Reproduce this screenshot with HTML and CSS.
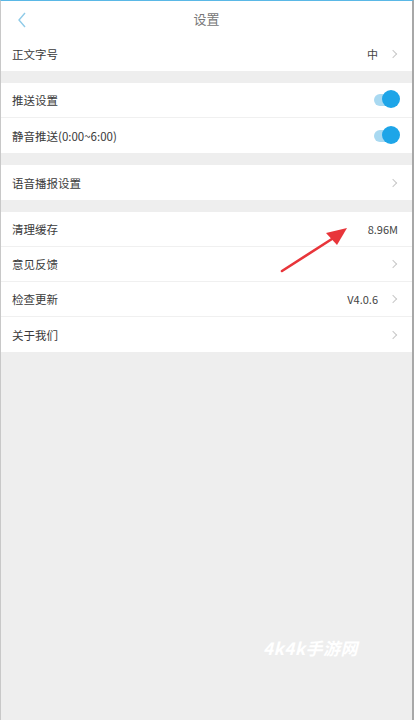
FILE: index.html
```html
<!DOCTYPE html>
<html lang="zh">
<head>
<meta charset="utf-8">
<link rel="stylesheet" href="styles.css">
</head>
<body>
<div class="screen">
  <header class="topbar">
    <svg class="back" width="10" height="16" viewBox="0 0 10 16"><path d="M8 1 L2 8 L8 15" fill="none" stroke="#8fcbe8" stroke-width="1.4"/></svg>
    <div class="title">设置</div>
  </header>

  <section class="group">
    <div class="row"><span class="label">正文字号</span><span class="right"><span class="val">中</span><span class="chev"></span></span></div>
  </section>

  <section class="group">
    <div class="row"><span class="label">推送设置</span><span class="toggle"><span class="knob"></span></span></div>
    <div class="row"><span class="label">静音推送(0:00~6:00)</span><span class="toggle"><span class="knob"></span></span></div>
  </section>

  <section class="group">
    <div class="row"><span class="label">语音播报设置</span><span class="right"><span class="chev"></span></span></div>
  </section>

  <section class="group">
    <div class="row cache"><span class="label">清理缓存</span><span class="right"><span class="val">8.96M</span></span>
      <svg class="arrow" width="80" height="50" viewBox="0 0 80 50"><path d="M3 47 L56 13" stroke="#e8353a" stroke-width="2.6" stroke-linecap="round"/><path d="M68 4 L47 9 L58 21 Z" fill="#e8353a"/></svg>
    </div>
    <div class="row"><span class="label">意见反馈</span><span class="right"><span class="chev"></span></span></div>
    <div class="row"><span class="label">检查更新</span><span class="right"><span class="val">V4.0.6</span><span class="chev"></span></span></div>
    <div class="row"><span class="label">关于我们</span><span class="right"><span class="chev"></span></span></div>
  </section>

  <div class="watermark">4k4k手游网</div>
</div>
</body>
</html>
```
FILE: styles.css
```css
* { box-sizing: border-box; }
html, body { margin: 0; padding: 0; }
body {
  width: 414px; height: 720px; overflow: hidden;
  font-family: "Noto Sans CJK SC", "Noto Sans", sans-serif;
  background: #eeeeee;
}
.screen {
  position: relative;
  width: 414px; height: 720px;
  background: #eeeeee;
  border-left: 1px solid #c8c8c8;
  border-right: 2px solid #a8a8a8;
  border-top: 1px solid #5ab8e6;
}
.topbar {
  position: relative;
  height: 35px;
  background: #fff;
  display: flex; align-items: center; justify-content: center;
}
.back { position: absolute; left: 16px; top: 11px; }
.title { font-size: 13px; color: #777; }
.group { background: #fff; margin-bottom: 12px; }
.row {
  position: relative;
  height: 35px;
  display: flex; align-items: center; justify-content: space-between;
  padding: 0 14px 0 11px;
  border-bottom: 1px solid #f0f0f0;
}
.row:last-child { border-bottom: none; }
.label { font-size: 11.5px; color: #3a3a3a; }
.right { display: flex; align-items: center; gap: 12px; }
.val { font-size: 11px; color: #444; }
.chev {
  width: 6px; height: 6px;
  border-top: 1px solid #c8c8c8; border-right: 1px solid #c8c8c8;
  transform: rotate(45deg);
  margin-right: 2px;
}
.toggle {
  position: relative;
  width: 22px; height: 12px;
  border-radius: 6px;
  background: #a9d9f1;
  margin-right: 2px;
}
.knob {
  position: absolute; right: -4px; top: -4px;
  width: 18px; height: 18px; border-radius: 50%;
  background: #1ea5e8;
}
.arrow { position: absolute; left: 278px; top: 12px; }
.watermark {
  position: absolute; left: 262px; top: 634px;
  font-size: 17px; font-style: italic; font-weight: 700;
  color: #fff; letter-spacing: 0.5px;
  font-family: "Noto Sans CJK SC", sans-serif;
}
```
